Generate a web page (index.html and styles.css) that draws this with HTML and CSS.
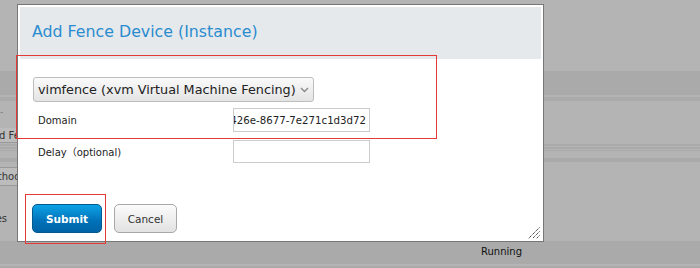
FILE: index.html
```html
<!DOCTYPE html>
<html lang="en">
<head>
  <meta charset="UTF-8" />
  <title>Add Fence Device</title>
  <link rel="stylesheet" href="styles.css">
</head>
<body>
  <div class="page">
    <div class="row r-top"></div>
    <div class="row band r-head"></div>
    <div class="row thin-light"></div>
    <div class="row thin-band"></div>
    <div class="row r-gap1"><span class="tick">-</span></div>
    <div class="row r-btn"><span class="bg-btn b1">Add Fence</span></div>
    <div class="row stripes"></div>
    <div class="row r-gap2"></div>
    <div class="row thin-band"></div>
    <div class="row r-gap3"><span class="bg-btn b2">Method</span></div>
    <div class="row r-text"><span class="bg-txt">Fences</span></div>
    <div class="row band r-foot"><span class="status">Running</span></div>
    <div class="row thin-light"></div>
    <div class="row band r-end"></div>
  </div>

  <div class="dialog">
    <div class="dlg-head"><h1>Add Fence Device (Instance)</h1></div>
    <div class="dlg-body">
      <div class="select">
        <span>vimfence (xvm Virtual Machine Fencing)</span>
        <svg width="9" height="6" viewBox="0 0 9 6"><path d="M1 1l3.5 3.5L8 1" fill="none" stroke="#888" stroke-width="1.4"/></svg>
      </div>
      <div class="form-row">
        <label>Domain</label>
        <div class="field"><span>e1b7a3c2-9f1d-426e-8677-7e271c1d3d72</span></div>
      </div>
      <div class="form-row">
        <label>Delay（optional)</label>
        <div class="field"></div>
      </div>
      <div class="actions">
        <button class="btn btn-primary">Submit</button>
        <button class="btn btn-default">Cancel</button>
      </div>
    </div>
    <svg class="grip" width="12" height="12" viewBox="0 0 12 12"><path d="M11.5 0.5L0.5 11.5M11.5 4.5L4.5 11.5M11.5 8.5L8.5 11.5" stroke="#222" stroke-width="1" stroke-dasharray="1.2 0.8"/></svg>
  </div>

  <div class="mark mark-form"></div>
  <div class="mark mark-submit"></div>
</body>
</html>
```

FILE: styles.css
```css
html,body{margin:0;padding:0;width:100%;height:100%;overflow:hidden;background:#b4b4b4;font-family:'DejaVu Sans',Verdana,'Noto Sans CJK SC',sans-serif}
.page{display:flex;flex-direction:column}
.row{position:relative;flex:none}
.r-top{height:71px}
.band{background:#aaa}
.r-head{height:24px}
.thin-light{height:2px;background:#b4b4b4}
.thin-band{height:4px;background:#aaa}
.r-gap1{height:27px}
.tick{position:absolute;left:0;top:6px;font-size:9px;color:#777}
.r-btn{height:16px}
.bg-btn{position:absolute;top:0;padding:0 3px;border:1px solid #999;border-left:none;background:#bcbcbc;font-size:10px;color:#333;white-space:nowrap}
.b1{left:-17px;height:14px;line-height:15px;border-top:none}
.stripes{height:7px;background:repeating-linear-gradient(#aaa 0 2px,#b4b4b4 2px 3px)}
.r-gap2{height:7px}
.r-gap3{height:29px}
.b2{left:-20px;top:5px;height:17px;line-height:17px}
.r-text{height:50px}
.bg-txt{position:absolute;right:calc(100% - 7px);top:22px;font-size:10px;color:#333}
.r-foot{height:23px}
.status{position:absolute;left:481px;top:5px;font-size:10px;color:#111}
.r-end{height:4px}

.dialog{position:absolute;left:17px;top:4px;width:527px;height:238px;box-sizing:border-box;border:1px solid #777;background:#fff;padding:2px}
.dlg-head{height:52px;background:#e6e9ec;padding-left:12px;display:flex;align-items:center}
.dlg-head h1{margin:0 0 4px;font-size:15.8px;font-weight:normal;color:#2a8ccf}
.dlg-body{padding:18px 0 0 13px}
.select{width:281px;height:25px;box-sizing:border-box;border:1px solid #bdbdbd;border-radius:3px;background:linear-gradient(#fafafa,#e4e4e4);display:flex;align-items:center;gap:4px;padding-left:4px;font-size:12.8px;color:#222;white-space:nowrap}
.form-row{display:grid;grid-template-columns:200px 137px;align-items:center;margin-top:6px}
.form-row + .form-row{margin-top:8px}
.form-row label{padding-left:5px;font-size:10px;color:#222}
.field{height:24px;box-sizing:border-box;border:1px solid #ccc;overflow:hidden;display:flex;justify-content:flex-end;align-items:center;padding-right:3px;font-size:10.2px;color:#222;white-space:nowrap}
.form-row + .form-row .field{height:23px}
.actions{display:flex;gap:12px;margin-top:41px}
.btn{height:29px;box-sizing:border-box;font-family:inherit;font-size:10.5px;border-radius:5px;padding:0}
.btn-primary{width:70px;margin-left:-1px;border:1px solid #04598f;background:linear-gradient(#0ea2e6,#0071b8 60%,#0064a6);color:#fff;font-weight:bold}
.btn-default{width:63px;border:1px solid #a8a8a8;background:linear-gradient(#fbfbfb,#e2e2e2);color:#333}
.grip{position:absolute;right:3px;bottom:2px}

.mark{position:absolute;border:1px solid #e53935;box-sizing:border-box}
.mark-form{left:16px;top:55px;width:421px;height:84px}
.mark-submit{left:25px;top:194px;width:81px;height:50px}
```
